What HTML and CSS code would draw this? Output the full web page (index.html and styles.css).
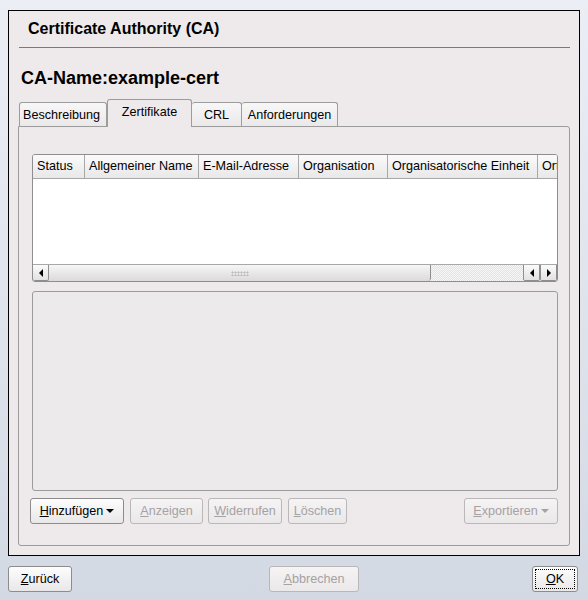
FILE: index.html
```html
<!DOCTYPE HTML>
<html>
<head>
  <title>Certificate Authority (CA)</title>
  <meta name="viewport" content="width=device-width, initial-scale=1">
  <link rel="stylesheet" href="styles.css">
</head>
<body>

  <div class="window">
    <div class="title">Certificate Authority (CA)</div>
    <div class="separator"></div>
    <h2 class="ca-name">CA-Name:example-cert</h2>

    <div class="tabs">
      <div class="tab first">Beschreibung</div>
      <div class="tab active">Zertifikate</div>
      <div class="tab crl">CRL</div>
      <div class="tab requests">Anforderungen</div>
    </div>

    <div class="pane">
      <div class="cert-table">
        <div class="thead">
          <div class="th col-status">Status</div>
          <div class="th col-name">Allgemeiner Name</div>
          <div class="th col-mail">E-Mail-Adresse</div>
          <div class="th col-org">Organisation</div>
          <div class="th col-unit">Organisatorische Einheit</div>
          <div class="th col-rest">Ort</div>
        </div>
        <div class="tbody"></div>
        <div class="hscroll">
          <div class="sb-btn"><span class="arrow-left"></span></div>
          <div class="sb-slider"><span class="grip"></span></div>
          <div class="sb-trough"></div>
          <div class="sb-btn"><span class="arrow-left"></span></div>
          <div class="sb-btn"><span class="arrow-right"></span></div>
        </div>
      </div>

      <div class="details"></div>

      <div class="actions">
        <button class="btn btn-add"><u>H</u>inzufügen<span class="arrow-down"></span></button>
        <button class="btn btn-show" disabled><u>A</u>nzeigen</button>
        <button class="btn btn-revoke" disabled><u>W</u>iderrufen</button>
        <button class="btn btn-delete" disabled><u>L</u>öschen</button>
        <button class="btn btn-export" disabled><u>E</u>xportieren<span class="arrow-down"></span></button>
      </div>
    </div>
  </div>

  <div class="footer">
    <button class="btn btn-back"><u>Z</u>urück</button>
    <button class="btn btn-cancel" disabled><u>A</u>bbrechen</button>
    <button class="btn btn-ok"><span class="focus"><u>O</u>K</span></button>
  </div>

</body>
</html>
```

FILE: styles.css
```css
html, body { margin: 0; height: 100%; }
body {
  font-family: "Liberation Sans", Arial, sans-serif;
  font-size: 12.6px;
  color: #000;
  background: linear-gradient(#eceef6, #d3d9e3);
  width: 588px;
  height: 600px;
  overflow: hidden;
}

.window {
  margin: 10px 0 0 8px;
  width: 572px;
  height: 546px;
  box-sizing: border-box;
  border: 1px solid #000;
  background-color: #eeeaec;
  display: flex;
  flex-direction: column;
}
.title {
  padding: 8px 0 0 19px;
  height: 20px;
  line-height: 20px;
  font-size: 16px;
  font-weight: bold;
}
.separator {
  margin: 8px 9px 0 10px;
  height: 1px;
  background-color: #7a7a7a;
}
.ca-name {
  margin: 19px 0 0 12px;
  font-size: 18px;
  line-height: 22px;
  font-weight: bold;
}

/* tab bar */
.tabs {
  display: flex;
  align-items: flex-end;
  margin: 9px 0 0 10px;
  height: 28px;
}
.tab {
  height: 24px;
  line-height: 24px;
  box-sizing: border-box;
  text-align: center;
  border: 1px solid #9c9c9c;
  border-bottom: none;
  border-left: none;
  border-radius: 3px 3px 0 0;
  background: linear-gradient(#f8f7f8, #ebe8ea);
}
.tab.first {
  width: 88px;
  padding-left: 3px;
  text-align: left;
  border-left: 1px solid #9c9c9c;
}
.tab.active {
  position: relative;
  top: 1px;
  width: 85px;
  height: 28px;
  line-height: 24px;
  border-left: 1px solid #9c9c9c;
  background: #eeeaec;
}
.tab.crl { width: 50px; }
.tab.requests { width: 96px; }

.pane {
  margin: 0 9px 9px 9px;
  flex: 1;
  border: 1px solid #9c9c9c;
  border-radius: 0 3px 3px 3px;
  padding: 27px 11px 0 13px;
  display: flex;
  flex-direction: column;
}

/* certificate list */
.cert-table {
  height: 126px;
  border: 1px solid #8e8e8e;
  border-radius: 3px;
  background: #fff;
  display: flex;
  flex-direction: column;
  overflow: hidden;
}
.thead {
  display: flex;
  height: 23px;
  border-bottom: 1px solid #a8a8a8;
  background: linear-gradient(#fbfbfb, #e9e7e8);
  white-space: nowrap;
  overflow: hidden;
}
.th {
  flex: none;
  line-height: 23px;
  padding-left: 4px;
  box-sizing: border-box;
  border-right: 1px solid #a8a8a8;
  overflow: hidden;
}
.col-status { width: 52px; }
.col-name { width: 114px; }
.col-mail { width: 100px; }
.col-org { width: 89px; }
.col-unit { width: 150px; }
.col-rest { width: 40px; border-right: none; }
.tbody { flex: 1; }

.hscroll {
  display: flex;
  height: 16px;
  border-top: 1px solid #a8a8a8;
}
.sb-btn {
  width: 15px;
  flex: none;
  border: 1px solid #8e8e8e;
  border-top: none;
  border-radius: 0 0 2px 2px;
  background: linear-gradient(#fbfbfb, #e3e1e2);
  display: flex;
  align-items: center;
  justify-content: center;
}
.sb-btn:first-child { border-left: none; }
.sb-slider {
  width: 381px;
  flex: none;
  border-right: 1px solid #8e8e8e;
  border-radius: 0 0 3px 0;
  background: linear-gradient(#f6f6f6, #dcdadb);
  display: flex;
  align-items: center;
  justify-content: center;
}
.grip {
  width: 18px;
  height: 5px;
  background-image: radial-gradient(#b8b8b8 45%, transparent 50%);
  background-size: 3px 3px;
}
.sb-trough {
  flex: 1;
  background-color: #f2f2f2;
  background-image: repeating-conic-gradient(#e2e2e2 0 25%, #f7f7f7 0 50%);
  background-size: 2px 2px;
}
.arrow-left {
  width: 0; height: 0;
  border-top: 4px solid transparent;
  border-bottom: 4px solid transparent;
  border-right: 4px solid #000;
}
.arrow-right {
  width: 0; height: 0;
  border-top: 4px solid transparent;
  border-bottom: 4px solid transparent;
  border-left: 4px solid #000;
}

.details {
  margin-top: 9px;
  height: 198px;
  border: 1px solid #9c9c9c;
  border-radius: 3px;
  background-color: #edeaec;
}

/* buttons */
.btn {
  font-family: "Liberation Sans", Arial, sans-serif;
  font-size: 12.6px;
  color: #000;
  height: 26px;
  padding: 0 4px;
  box-sizing: border-box;
  border: 1px solid #8c8c8c;
  border-radius: 3px;
  background: linear-gradient(#fdfdfd, #e9e7e8);
  display: inline-flex;
  align-items: center;
  justify-content: center;
}
.btn:disabled {
  color: #a4a2a3;
  border-color: #b9b7b8;
  background: linear-gradient(#f5f3f4, #ebe8ea);
}
.arrow-down {
  width: 0; height: 0;
  margin-left: 3px;
  border-left: 4px solid transparent;
  border-right: 4px solid transparent;
  border-top: 4px solid #000;
}
.btn:disabled .arrow-down { border-top-color: #a4a2a3; }

.actions {
  display: flex;
  margin: 7px 0 0 -2px;
}
.btn-add { width: 94px; }
.btn-show { width: 73px; margin-left: 6px; }
.btn-revoke { width: 74px; margin-left: 5px; }
.btn-delete { width: 59px; margin-left: 6px; }
.btn-export { width: 94px; margin-left: auto; }

.footer {
  display: flex;
  margin: 10px 10px 0 8px;
}
.btn-back { width: 64px; }
.btn-cancel { width: 90px; margin-left: 197px; }
.btn-ok { width: 46px; margin-left: auto; padding: 2px; }
.focus {
  flex: 1;
  align-self: stretch;
  display: flex;
  align-items: center;
  justify-content: center;
  border: 1px dotted #000;
}
```
